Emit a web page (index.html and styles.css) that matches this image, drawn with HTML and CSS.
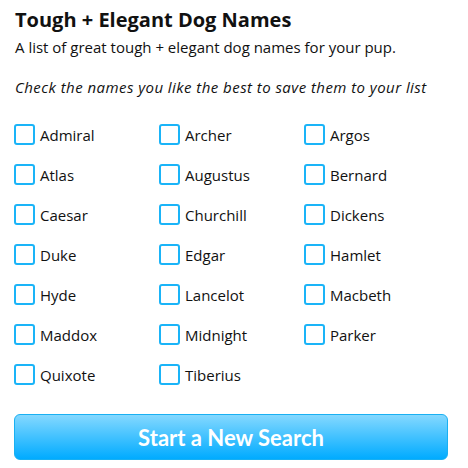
FILE: index.html
```html
<!DOCTYPE html>
<html lang="en">
<head>
  <meta charset="UTF-8" />
  <title>Tough + Elegant Dog Names</title>
  <link rel="stylesheet" href="styles.css">
</head>
<body>
  <div class="page">
    <h1 class="title">Tough + Elegant Dog Names</h1>
    <p class="sub">A list of great tough + elegant dog names for your pup.</p>
    <p class="hint">Check the names you like the best to save them to your list</p>
    <div class="names">
      <label class="name"><input type="checkbox"><span class="box"></span>Admiral</label>
      <label class="name"><input type="checkbox"><span class="box"></span>Archer</label>
      <label class="name"><input type="checkbox"><span class="box"></span>Argos</label>
      <label class="name"><input type="checkbox"><span class="box"></span>Atlas</label>
      <label class="name"><input type="checkbox"><span class="box"></span>Augustus</label>
      <label class="name"><input type="checkbox"><span class="box"></span>Bernard</label>
      <label class="name"><input type="checkbox"><span class="box"></span>Caesar</label>
      <label class="name"><input type="checkbox"><span class="box"></span>Churchill</label>
      <label class="name"><input type="checkbox"><span class="box"></span>Dickens</label>
      <label class="name"><input type="checkbox"><span class="box"></span>Duke</label>
      <label class="name"><input type="checkbox"><span class="box"></span>Edgar</label>
      <label class="name"><input type="checkbox"><span class="box"></span>Hamlet</label>
      <label class="name"><input type="checkbox"><span class="box"></span>Hyde</label>
      <label class="name"><input type="checkbox"><span class="box"></span>Lancelot</label>
      <label class="name"><input type="checkbox"><span class="box"></span>Macbeth</label>
      <label class="name"><input type="checkbox"><span class="box"></span>Maddox</label>
      <label class="name"><input type="checkbox"><span class="box"></span>Midnight</label>
      <label class="name"><input type="checkbox"><span class="box"></span>Parker</label>
      <label class="name"><input type="checkbox"><span class="box"></span>Quixote</label>
      <label class="name"><input type="checkbox"><span class="box"></span>Tiberius</label>
    </div>
    <button class="button">Start a New Search</button>
  </div>
</body>
</html>
```
FILE: styles.css
```css
body {
  margin: 0;
  padding: 0;
  background-color: #fff;
  color: #111;
  font-family: "Open Sans", "Liberation Sans", Arial, sans-serif;
}
.page {
  padding: 7px 20px 0 14px;
}
.title {
  margin: 0 0 0 1px;
  font-size: 20px;
  font-weight: bold;
  line-height: 25px;
}
.sub {
  margin: 5px 0 0 1px;
  font-size: 15px;
  line-height: 20px;
}
.hint {
  margin: 20px 0 0 1px;
  font-size: 15px;
  font-style: italic;
  letter-spacing: 0.45px;
  line-height: 20px;
}
.names {
  display: grid;
  grid-template-columns: 145px 145px 145px;
  row-gap: 19px;
  margin-top: 27px;
}
.name {
  display: flex;
  align-items: center;
  height: 21px;
  font-size: 15px;
  cursor: pointer;
}
.name input {
  display: none;
}
.box {
  width: 17px;
  height: 17px;
  border: 2px solid #1ab4f8;
  border-radius: 3px;
  margin-right: 5px;
}
.name input:checked + .box {
  background-color: #1ab4f8;
}
.button {
  display: block;
  width: 434px;
  height: 46px;
  margin-top: 29px;
  border: 1px solid #19b0f2;
  border-radius: 6px;
  background: linear-gradient(#84d8ff, #00abff);
  color: #fff;
  font-family: "Lato", sans-serif;
  font-weight: bold;
  font-size: 22px;
  cursor: pointer;
}
```
